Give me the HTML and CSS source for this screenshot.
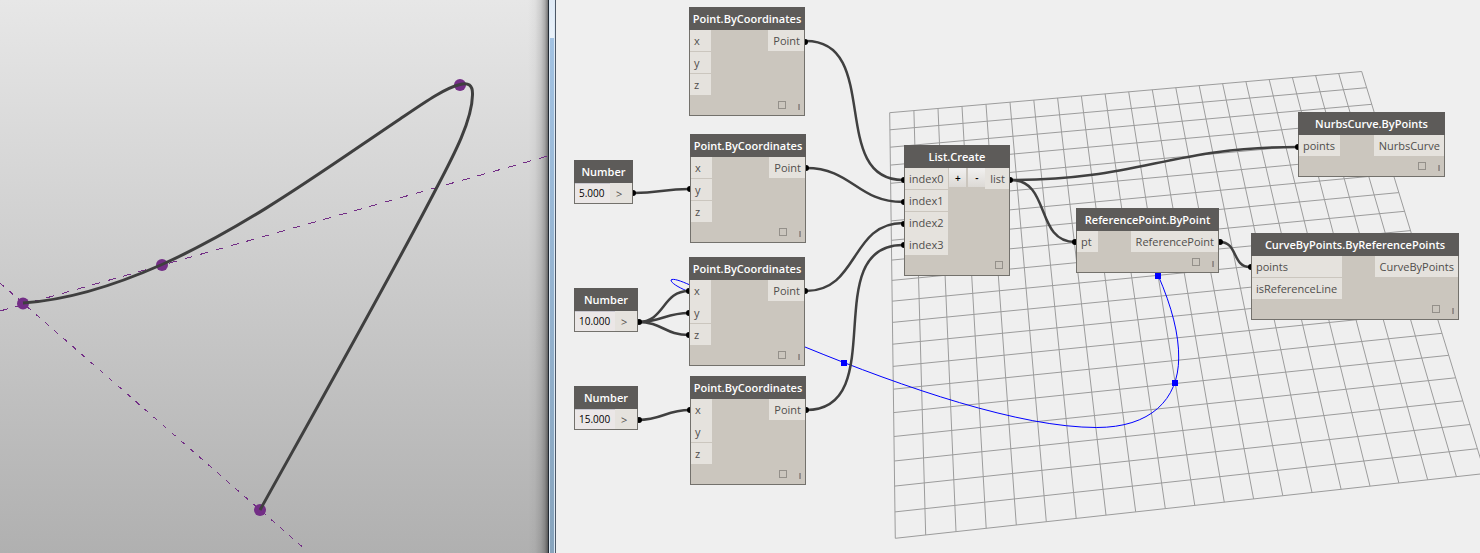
FILE: index.html
```html
<!DOCTYPE html>
<html lang="en">
<head>
<meta charset="utf-8">
<title>Curve by points</title>
<link rel="stylesheet" href="styles.css">
</head>
<body>
<main class="app">
  <section class="viewport" aria-label="3D view">
    <svg class="layer" aria-hidden="true">
      <g class="guides">
        <line x1="0" y1="311" x2="548" y2="156" stroke-dasharray="8 8"/>
        <line x1="0" y1="283" x2="306" y2="550" stroke-dasharray="5 7"/>
      </g>
      <g class="points">
        <circle cx="23" cy="303.500" r="6"/>
        <circle cx="162" cy="265" r="6"/>
        <circle cx="460" cy="85" r="6"/>
        <circle cx="260" cy="510" r="6"/>
      </g>
      <path class="spline" d="M23 303C70 300 118 284 162 264.500C248 226 327 168 400 119C425 102 445 88 460 84.500C468 82 473 85 472.500 95C472 120 455 153 436 189C390 278 310 420 260 510"/>
    </svg>
  </section>
  <div class="divider" role="separator"><div class="divider-thumb"></div></div>
  <section class="workspace" aria-label="Graph">
    <svg class="layer" aria-hidden="true">
      <g transform="translate(-556 0)">
        <path id="grid" class="grid"/>
        <path class="preview" d="M1158 275C1172 307 1179 335 1178.700 358C1178.500 400 1150 427.500 1096.700 427.500C1020 427.500 905 388 805 347C760 329 715 308 687 291C678 287 671 283 671 280C673 278 681 281 690 285"/>
        <g class="preview-points">
          <rect x="1155" y="273" width="6" height="6"/>
          <rect x="1172" y="380" width="6" height="6"/>
          <rect x="841" y="360" width="6" height="6"/>
        </g>
        <g class="wires">
          <path d="M806 41C882 41 828 180 903 180"/>
          <path d="M806 168C852 168 857 202 903 202"/>
          <path d="M806 291C859 291 850 223 903 223"/>
          <path d="M806 410C892 410 817 245 903 245"/>
          <path d="M634 193C659 193 664 189 689 189"/>
          <path d="M638 322C665 322 662 291 689 291"/>
          <path d="M638 322C661 322 666 313 689 313"/>
          <path d="M638 322C662 322 665 335 689 335"/>
          <path d="M638 420C662 420 666 410 690 410"/>
          <path d="M1011 180C1141 180 1168 147 1298 147"/>
          <path d="M1011 180C1051 180 1035 242 1075 242"/>
          <path d="M1220 242C1238 242 1232 267 1250 267"/>
        </g>
        <g class="ends">
          <circle cx="805" cy="42" r="3"/><circle cx="806" cy="168" r="3"/>
          <circle cx="805" cy="291" r="3"/><circle cx="806" cy="410" r="3"/>
          <circle cx="904" cy="180" r="3"/><circle cx="904" cy="202" r="3"/>
          <circle cx="904" cy="224" r="3"/><circle cx="904" cy="245" r="3"/>
          <circle cx="633" cy="193" r="3"/><circle cx="690" cy="189" r="3"/>
          <circle cx="639" cy="322" r="3"/><circle cx="689" cy="291" r="3"/>
          <circle cx="689" cy="313" r="3"/><circle cx="689" cy="335" r="3"/>
          <circle cx="639" cy="420" r="3"/><circle cx="690" cy="410" r="3"/>
          <circle cx="1010" cy="180" r="3"/><circle cx="1298" cy="147" r="3"/>
          <circle cx="1075" cy="242" r="3"/><circle cx="1220" cy="242" r="3"/>
          <circle cx="1251" cy="267" r="3"/>
        </g>
      </g>
    </svg>

    <article class="node node-point point-a">
      <h2 class="node-title">Point.ByCoordinates</h2>
      <div class="ports">
        <ul class="inputs"><li>x</li><li>y</li><li>z</li></ul>
        <ul class="outputs"><li>Point</li></ul>
      </div>
      <div class="node-foot"><input type="checkbox" aria-label="Preview"><span class="lacing"></span></div>
    </article>
    <article class="node node-point point-b">
      <h2 class="node-title">Point.ByCoordinates</h2>
      <div class="ports">
        <ul class="inputs"><li>x</li><li>y</li><li>z</li></ul>
        <ul class="outputs"><li>Point</li></ul>
      </div>
      <div class="node-foot"><input type="checkbox" aria-label="Preview"><span class="lacing"></span></div>
    </article>
    <article class="node node-point point-c">
      <h2 class="node-title">Point.ByCoordinates</h2>
      <div class="ports">
        <ul class="inputs"><li class="joined">x</li><li>y</li><li>z</li></ul>
        <ul class="outputs"><li>Point</li></ul>
      </div>
      <div class="node-foot"><input type="checkbox" aria-label="Preview"><span class="lacing"></span></div>
    </article>
    <article class="node node-point point-d">
      <h2 class="node-title">Point.ByCoordinates</h2>
      <div class="ports">
        <ul class="inputs"><li class="joined">x</li><li>y</li><li>z</li></ul>
        <ul class="outputs"><li>Point</li></ul>
      </div>
      <div class="node-foot"><input type="checkbox" aria-label="Preview"><span class="lacing"></span></div>
    </article>

    <article class="node number-a">
      <h2 class="node-title"><label for="num-a">Number</label></h2>
      <div class="number-row"><input id="num-a" class="number-value" type="text" value="5.000"><span class="number-out">&gt;</span></div>
    </article>
    <article class="node number-wide number-b">
      <h2 class="node-title"><label for="num-b">Number</label></h2>
      <div class="number-row"><input id="num-b" class="number-value" type="text" value="10.000"><span class="number-out">&gt;</span></div>
    </article>
    <article class="node number-wide number-c">
      <h2 class="node-title"><label for="num-c">Number</label></h2>
      <div class="number-row"><input id="num-c" class="number-value" type="text" value="15.000"><span class="number-out">&gt;</span></div>
    </article>

    <article class="node list-create">
      <h2 class="node-title">List.Create</h2>
      <div class="ports">
        <ul class="inputs"><li>index0</li><li>index1</li><li class="joined">index2</li><li>index3</li></ul>
        <div class="list-buttons"><button type="button">+</button><button type="button">-</button></div>
        <ul class="outputs"><li>list</li></ul>
      </div>
      <div class="node-foot foot-end"><input type="checkbox" aria-label="Preview"></div>
    </article>

    <article class="node reference-point">
      <h2 class="node-title">ReferencePoint.ByPoint</h2>
      <div class="ports">
        <ul class="inputs"><li>pt</li></ul>
        <ul class="outputs"><li>ReferencePoint</li></ul>
      </div>
      <div class="node-foot"><input type="checkbox" aria-label="Preview"><span class="lacing"></span></div>
    </article>

    <article class="node nurbs-curve">
      <h2 class="node-title">NurbsCurve.ByPoints</h2>
      <div class="ports">
        <ul class="inputs"><li>points</li></ul>
        <ul class="outputs"><li>NurbsCurve</li></ul>
      </div>
      <div class="node-foot"><input type="checkbox" aria-label="Preview"><span class="lacing"></span></div>
    </article>

    <article class="node curve-by-points">
      <h2 class="node-title">CurveByPoints.ByReferencePoints</h2>
      <div class="ports">
        <ul class="inputs"><li>points</li><li>isReferenceLine</li></ul>
        <ul class="outputs"><li>CurveByPoints</li></ul>
      </div>
      <div class="node-foot"><input type="checkbox" aria-label="Preview"><span class="lacing"></span></div>
    </article>
  </section>
</main>
<script src="grid.js"></script>
</body>
</html>
```

FILE: styles.css
```css
* {
  box-sizing: border-box;
}

body {
  margin: 0;
  font-family: "Open Sans", "Noto Sans", sans-serif;
  font-size: 11px;
  color: #504e4c;
}

.app {
  display: flex;
  min-height: 100vh;
}

.viewport,
.workspace {
  position: relative;
  min-width: 0;
  overflow: hidden;
}

.viewport {
  flex: 137 1 0;
  background:
    linear-gradient(to left, rgba(0, 0, 0, 0.5), rgba(0, 0, 0, 0.26) 3px, rgba(0, 0, 0, 0.12) 7px, rgba(0, 0, 0, 0.03) 13px, transparent 20px),
    linear-gradient(#e7e7e7, #b0b0b0);
}

.workspace {
  flex: 231 1 0;
  background: #efefef;
}

.divider {
  flex: 0 0 8px;
  padding: 0 1px;
  border-left: 1px solid #222a33;
  border-right: 1px solid #4c5766;
  background: #dce9f5;
}

.divider-thumb {
  height: 100%;
  background: linear-gradient(#dfeaf6, #eaf2fa 38px, #a2c2e2 38px, #87a4bd);
}

.layer {
  position: absolute;
  inset: 0;
  width: 100%;
  height: 100%;
}

.guides {
  stroke: #732e86;
  stroke-width: 1;
  shape-rendering: crispEdges;
}

.points {
  fill: #732e86;
}

.spline {
  fill: none;
  stroke: #3f3f3f;
  stroke-width: 3;
}

.grid {
  fill: none;
  stroke: #9c9c9c;
  stroke-width: 1;
}

.preview {
  fill: none;
  stroke: #0000ff;
  stroke-width: 1;
}

.preview-points {
  fill: #0000ff;
}

.wires {
  fill: none;
  stroke: #404040;
  stroke-width: 2.5;
}

.ends {
  fill: #000;
}

.node {
  position: absolute;
  border: 1px solid #73716c;
  background: #cbc6be;
}

.node-title {
  height: 23px;
  margin: -1px -1px 0;
  background: #5d5b59;
  color: #fff;
  font-size: 11px;
  font-weight: 600;
  line-height: 24px;
  text-align: center;
  white-space: nowrap;
}

.ports {
  display: flex;
  align-items: flex-start;
}

.inputs,
.outputs {
  display: grid;
  gap: 1px;
  margin: 0;
  padding: 0;
  list-style: none;
  line-height: 22px;
  white-space: nowrap;
}

.inputs li,
.outputs li {
  height: 21px;
  background: #e5e2dd;
}

.inputs li {
  min-width: 21px;
  padding: 0 5px 0 4px;
}

.inputs .joined {
  box-shadow: 0 1px #e5e2dd;
}

.outputs {
  margin-left: auto;
}

.outputs li {
  padding: 0 4px 0 5px;
}

.node-foot {
  display: flex;
  justify-content: flex-end;
  align-items: center;
  gap: 12px;
  height: 20px;
  padding-right: 4px;
}

.foot-end {
  padding-right: 6px;
}

.node-foot input {
  appearance: none;
  width: 8px;
  height: 8px;
  margin: 0;
  border: 1px solid #94908a;
}

.lacing {
  width: 2px;
  height: 6px;
  margin-top: 3px;
  border-left: 1px solid #a39083;
  border-right: 1px solid #8c8f96;
}

.number-row {
  display: flex;
  height: 20px;
}

.number-value {
  width: 35px;
  padding: 0 4px;
  border: 0;
  border-top: 1px solid #c9c7cf;
  background: #ebe7e7;
  color: #000;
  font: 10px/19px "Open Sans", "Noto Sans", sans-serif;
}

.number-out {
  flex: 1;
  padding-left: 6px;
  background: #e5e2dd;
  line-height: 21px;
}

.list-buttons {
  display: flex;
  gap: 2px;
  margin-left: 1px;
}

.list-buttons button {
  width: 17px;
  height: 19px;
  padding: 0;
  border: 0;
  background: linear-gradient(#f2f1f0, #dcd9d5);
  color: #000;
  font: 600 10px/18px "Open Sans", "Noto Sans", sans-serif;
}

.node-point { width: 116px; }
.point-a { left: 133px; top: 7px; }
.point-b { left: 134px; top: 134px; }
.point-c { left: 133px; top: 257px; }
.point-d { left: 134px; top: 376px; }

.number-a { left: 18px; top: 160px; width: 59px; }
.number-wide { left: 18px; width: 64px; }
.number-wide .number-value { width: 40px; }
.number-b { top: 288px; }
.number-c { top: 386px; }

.list-create { left: 348px; top: 145px; width: 106px; }
.reference-point { left: 520px; top: 208px; width: 143px; }
.nurbs-curve { left: 742px; top: 112px; width: 147px; }
.curve-by-points { left: 695px; top: 233px; width: 208px; }
```

FILE: grid.js
```js
// Ground plane: a 20 x 20 grid seen in perspective, mapped onto four corners.
const CELLS = 20;
const [a, b, c, d] = [[889.7, 112.7], [1361.7, 71.5], [1485, 473.5], [895.3, 538.3]];

const dx1 = b[0] - c[0], dx2 = d[0] - c[0], sx = a[0] - b[0] + c[0] - d[0];
const dy1 = b[1] - c[1], dy2 = d[1] - c[1], sy = a[1] - b[1] + c[1] - d[1];
const det = dx1 * dy2 - dx2 * dy1;
const g = (sx * dy2 - dx2 * sy) / det;
const h = (dx1 * sy - sx * dy1) / det;

function project(u, v) {
  const w = g * u + h * v + 1;
  const x = (b[0] - a[0] + g * b[0]) * u + (d[0] - a[0] + h * d[0]) * v + a[0];
  const y = (b[1] - a[1] + g * b[1]) * u + (d[1] - a[1] + h * d[1]) * v + a[1];
  return (x / w).toFixed(1) + " " + (y / w).toFixed(1);
}

let path = "";
for (let i = 0; i <= CELLS; i++) {
  const t = i / CELLS;
  path += "M" + project(t, 0) + "L" + project(t, 1);
  path += "M" + project(0, t) + "L" + project(1, t);
}
document.getElementById("grid").setAttribute("d", path);
```
